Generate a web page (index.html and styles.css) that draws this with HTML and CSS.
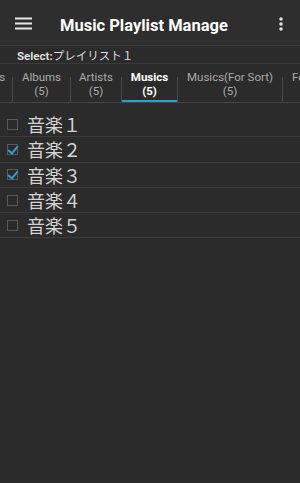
FILE: index.html
```html
<!DOCTYPE html>
<html lang="ja">
<head>
    <meta charset="UTF-8">
    <meta name="viewport" content="width=device-width, initial-scale=1.0">
    <title>Music Playlist Manage</title>
    <link rel="stylesheet" href="styles.css">
</head>
<body>
    <div class="app-bar">
        <span class="menu-btn">
            <svg width="17" height="13" viewBox="0 0 17 13"><path d="M0 1.5h17M0 6.5h17M0 11.5h17" stroke="#e8e8e8" stroke-width="2"/></svg>
        </span>
        <span class="title">Music Playlist Manage</span>
        <span class="more-btn">
            <svg width="4" height="14" viewBox="0 0 4 14"><circle cx="2" cy="2" r="1.8" fill="#ddd"/><circle cx="2" cy="7" r="1.8" fill="#ddd"/><circle cx="2" cy="12" r="1.8" fill="#ddd"/></svg>
        </span>
    </div>
    <div class="select-bar"><b>Select:</b>プレイリスト１</div>
    <div class="tabs">
        <div class="tab"><span>Songs</span><span>(5)</span></div>
        <div class="tab"><span>Albums</span><span>(5)</span></div>
        <div class="tab"><span>Artists</span><span>(5)</span></div>
        <div class="tab active"><span>Musics</span><span>(5)</span></div>
        <div class="tab"><span>Musics(For Sort)</span><span>(5)</span></div>
        <div class="tab"><span>Folders</span><span>(5)</span></div>
    </div>
    <ul class="list">
        <li><span class="check"></span>音楽１</li>
        <li><span class="check on"></span>音楽２</li>
        <li><span class="check on"></span>音楽３</li>
        <li><span class="check"></span>音楽４</li>
        <li><span class="check"></span>音楽５</li>
    </ul>
</body>
</html>
```

FILE: styles.css
```css
* {padding: 0; margin: 0; box-sizing: border-box;}
body {background: #2b2b2b; font-family: Roboto, "Noto Sans CJK JP", sans-serif; color: #ddd; width: 300px; height: 483px; overflow: hidden;}

.app-bar {height: 46px; display: flex; align-items: center; background: #2e2e2e; border-bottom: 1px solid #3a3a3a; padding-top: 2px;}
.menu-btn {width: 46px; padding-left: 15px; display: flex;}
.title {flex: 1; font-size: 16.5px; font-weight: bold; color: #fff; padding-left: 14px; padding-top: 3px;}
.more-btn {width: 38px; display: flex; justify-content: center; padding-right: 1px;}

.select-bar {height: 18px; font-size: 11.5px; line-height: 16px; padding: 2px 0 0 17px; color: #ddd; border-bottom: 1px solid #3a3a3a;}
.select-bar b {font-weight: bold;}

.tabs {display: flex; height: 39px; border-bottom: 1px solid #444; margin-left: -25px; white-space: nowrap;}
.tab {flex: none; display: flex; flex-direction: column; align-items: center; font-size: 11.5px; line-height: 14px; color: #aaa; padding-top: 6px; border-right: 1px solid #444; border-image: linear-gradient(to bottom, transparent 35%, #4a4a4a 35%) 1;}
.tab:nth-child(1) {width: 38px; padding-right: 9px;}
.tab:nth-child(2) {width: 58px;}
.tab:nth-child(3) {width: 51px;}
.tab:nth-child(4) {width: 56px;}
.tab:nth-child(5) {width: 105px;}
.tab:nth-child(6) {width: 56px; border-right: none;}
.tab.active {color: #fff; font-weight: bold; box-shadow: inset 0 -2px 0 #2a9fd0;}

.list {list-style: none; margin-top: 9px;}
.list li {height: 25.3px; display: flex; align-items: center; font-size: 18px; color: #d4d4d4; border-bottom: 1px solid #3c3c3c;}
.check {width: 11px; height: 11px; border: 1px solid #5a5a5a; margin: 0 9px 0 7px; position: relative; flex: none;}
.check.on::after {content: ""; position: absolute; left: 2px; top: -1px; width: 4px; height: 8px; border: solid #2a9fd0; border-width: 0 2px 2px 0; transform: rotate(40deg);}
```
